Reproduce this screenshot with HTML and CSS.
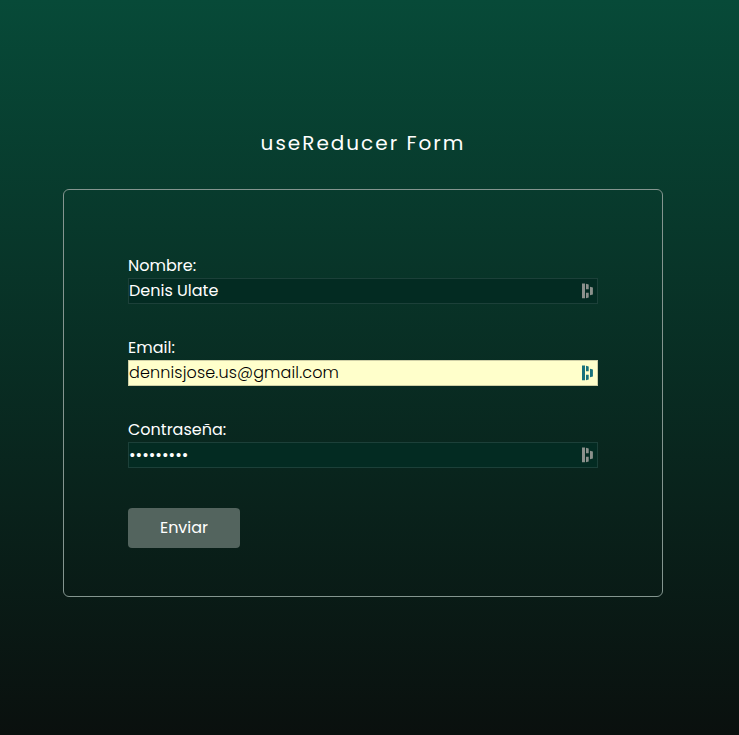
FILE: index.html
```
<!DOCTYPE html>
<html lang="es">
<head>
<meta charset="utf-8">
<title>useReducer Form</title>
<link rel="stylesheet" href="styles.css">
</head>
<body>
<main class="page">
  <h1 class="title">useReducer Form</h1>
  <form class="form">
    <div class="field">
      <label class="label" for="name">Nombre:</label>
      <div class="control">
        <input class="input" id="name" type="text" value="Denis Ulate">
        <svg class="mark" viewBox="0 0 12 16"><path d="M0 .5h3v14.7H0zM4 .8l2.7.8v4.6H4zM8 3.8l2.9.8v6.8l-2.9.8zM4 9.8h2.7v4.7l-2.7.8z"/></svg>
      </div>
    </div>
    <div class="field">
      <label class="label" for="email">Email:</label>
      <div class="control filled">
        <input class="input" id="email" type="text" value="dennisjose.us@gmail.com">
        <svg class="mark" viewBox="0 0 12 16"><path d="M0 .5h3v14.7H0zM4 .8l2.7.8v4.6H4zM8 3.8l2.9.8v6.8l-2.9.8zM4 9.8h2.7v4.7l-2.7.8z"/></svg>
      </div>
    </div>
    <div class="field">
      <label class="label" for="password">Contraseña:</label>
      <div class="control">
        <input class="input" id="password" type="password" value="123456789">
        <svg class="mark" viewBox="0 0 12 16"><path d="M0 .5h3v14.7H0zM4 .8l2.7.8v4.6H4zM8 3.8l2.9.8v6.8l-2.9.8zM4 9.8h2.7v4.7l-2.7.8z"/></svg>
      </div>
    </div>
    <button class="submit" type="button">Enviar</button>
  </form>
</main>
</body>
</html>
```
FILE: styles.css
```
* { box-sizing: border-box; }
body {
  margin: 0;
  height: 735px;
  overflow: hidden;
  background: linear-gradient(180deg, #074a38 0%, #0a100e 100%);
  color: #fff;
  font: 400 16px/24px Poppins, Inter, sans-serif;
}
.page { width: 600px; margin-left: 63px; padding-top: 127px; }
.title {
  margin: 0 0 30px;
  text-align: center;
  font-size: 20px;
  line-height: 32px;
  font-weight: 400;
  letter-spacing: 2px;
}
.form {
  height: 408px;
  padding: 64px 64px 48px;
  border: 1px solid #84958f;
  border-radius: 6px;
}
.field { margin-bottom: 32px; }
.label { display: block; width: max-content; }
.control {
  display: flex;
  align-items: center;
  height: 26px;
  padding-right: 3px;
  border: 1px solid #1c4039;
  background: #032b22;
}
.filled { background: #ffffcb; border-color: #cfcfa6; }
.input {
  flex: 1;
  min-width: 0;
  height: 24px;
  padding: 0;
  border: 0;
  outline: 0;
  background: transparent;
  color: #fff;
  font: inherit;
}
.filled .input { color: #000; font-weight: 300; letter-spacing: 0.14px; }
.mark { width: 12px; height: 16px; fill: #8b918c; }
.filled .mark { fill: #19727c; }
.submit {
  display: block;
  width: 112px;
  height: 40px;
  margin-top: 40px;
  padding: 0;
  border: 0;
  border-radius: 4px;
  background: #53645e;
  color: #fff;
  font: inherit;
}
```
